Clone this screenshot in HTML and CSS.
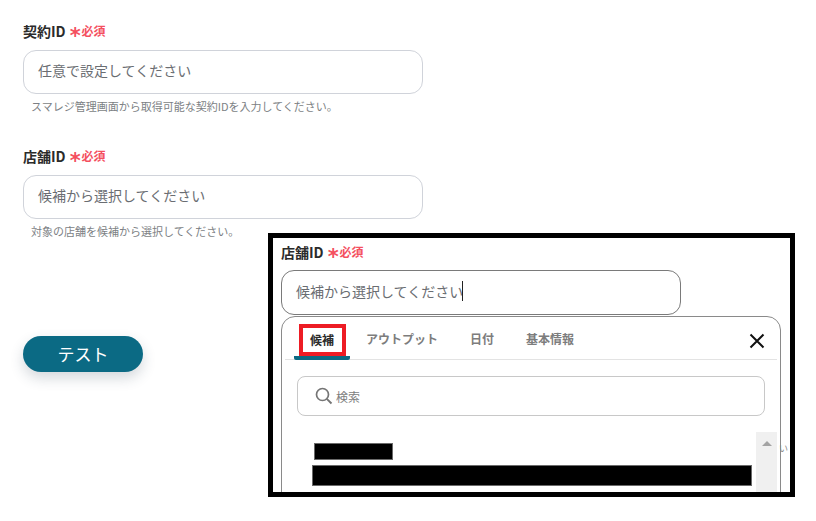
FILE: index.html
```html
<!DOCTYPE html>
<html lang="ja">
<head>
<meta charset="utf-8">
<title>店舗ID</title>
<link rel="stylesheet" href="styles.css">
</head>
<body>
<main class="form">
  <section class="field">
    <div class="label"><span>契約ID</span><span class="star">*</span><span class="req">必須</span></div>
    <div class="input">任意で設定してください</div>
    <p class="help">スマレジ管理画面から取得可能な契約IDを入力してください。</p>
  </section>
  <section class="field field-second">
    <div class="label"><span>店舗ID</span><span class="star">*</span><span class="req">必須</span></div>
    <div class="input">候補から選択してください</div>
    <p class="help">対象の店舗を候補から選択してください。</p>
  </section>
  <button class="test" type="button">テスト</button>
</main>
<aside class="inset">
  <div class="label inset-label"><span>店舗ID</span><span class="star">*</span><span class="req">必須</span></div>
  <div class="input inset-input"><span>候補から選択してください</span><i class="caret"></i></div>
  <div class="panel">
    <div class="tabs">
      <div class="tab tab-active"><span class="tab-mark">候補</span></div>
      <div class="tab">アウトプット</div>
      <div class="tab">日付</div>
      <div class="tab">基本情報</div>
      <svg class="close" width="16" height="16" viewBox="0 0 16 16" aria-label="閉じる"><path d="M1.5 1.5 14.5 14.5M14.5 1.5 1.5 14.5" stroke="#111" stroke-width="2" fill="none"/></svg>
    </div>
    <div class="search">
      <svg width="18" height="18" viewBox="0 0 18 18"><circle cx="7.5" cy="7.5" r="6" fill="none" stroke="#757575" stroke-width="1.7"/><path d="M11.8 11.8 16.5 16.5" stroke="#757575" stroke-width="1.9"/></svg>
      <span>検索</span>
    </div>
    <div class="results">
      <div class="list">
        <div class="redact redact-short"></div>
        <div class="redact redact-long"></div>
      </div>
      <div class="scrollbar"><i class="arrow"></i></div>
    </div>
  </div>
  <span class="sliver">い</span>
</aside>
</body>
</html>
```

FILE: styles.css
```css
* { box-sizing: border-box; }
html, body { margin: 0; height: 521px; overflow: hidden; background: #fff; }
body {
  position: relative;
  font-family: "Noto Sans CJK JP", "Noto Sans", sans-serif;
  color: #2b2b2b;
}
.form { padding: 22px 0 0 23px; width: 423px; }
.field-second { margin-top: 33px; }
.label {
  display: flex;
  align-items: center;
  height: 18px;
  font-size: 14px;
  font-weight: 700;
  line-height: 18px;
  color: #2b2b2b;
}
.star {
  color: #f4505f;
  font-size: 21px;
  font-weight: 700;
  margin: 9px 1px 0 4px;
  font-family: "DejaVu Sans", sans-serif;
  line-height: 18px;
}
.req { color: #f4505f; font-size: 12px; }
.input {
  display: flex;
  align-items: center;
  width: 400px;
  height: 44px;
  margin-top: 10px;
  padding: 0 0 4px 14px;
  border: 1px solid #d0d3da;
  border-radius: 13px;
  font-size: 14px;
  color: #6a6d72;
  background: #fff;
}
.help {
  margin: 4px 0 0 8px;
  font-size: 11px;
  line-height: 16px;
  color: #7c7f84;
}
.test {
  display: block;
  width: 120px;
  height: 36px;
  margin-top: 97px;
  padding: 0 0 2px;
  border: 0;
  border-radius: 18px;
  background: #0b6a84;
  color: #fff;
  font: 400 17px "Noto Sans CJK JP", sans-serif;
  box-shadow: 0 6px 14px rgba(40, 60, 80, .2);
}
.inset {
  position: absolute;
  left: 268px;
  top: 233px;
  width: 527px;
  height: 264px;
  padding: 5px 0 0 8px;
  border: 5px solid #000;
  background: #fff;
  overflow: hidden;
}
.inset-label { height: 18px; }
.inset-input {
  margin-top: 9px;
  height: 45px;
  border-color: #7a7a7a;
}
.caret { width: 1px; height: 20px; background: #222; margin-left: -1px; }
.panel {
  width: 500px;
  height: 240px;
  margin-top: 1px;
  border: 1px solid #8a8a8a;
  border-radius: 14px;
  padding: 0 3px;
  background: #fff;
}
.tabs {
  display: flex;
  align-items: flex-end;
  height: 43px;
  border-bottom: 1px solid #e3e3e3;
  position: relative;
  padding-left: 9px;
}
.tab {
  font-size: 12px;
  font-weight: 700;
  color: #7d7d7d;
  padding: 0 16px;
  height: 37px;
  line-height: 33px;
}
.tab-active {
  width: 56px;
  padding: 0;
  display: flex;
  justify-content: center;
  color: #2b2b2b;
  border-bottom: 4px solid #0b6a84;
  border-radius: 2px;
  margin-bottom: -1px;
  height: 36px;
}
.tab-mark {
  width: 47px;
  height: 32px;
  border: 4px solid #ed1c24;
  text-align: center;
  line-height: 24px;
}
.close { position: absolute; right: 12px; top: 16px; }
.search {
  display: flex;
  align-items: center;
  gap: 3px;
  width: 468px;
  height: 40px;
  margin: 16px 0 0 12px;
  padding-left: 17px;
  border: 1px solid #c8c8c8;
  border-radius: 8px;
  font-size: 12px;
  color: #7d7d7d;
}
.results {
  display: flex;
  justify-content: space-between;
  margin-top: 16px;
}
.list { padding: 11px 0 0 27px; }
.redact { background: #000; border: 1px solid #6a6a6a; }
.redact-short { width: 79px; height: 17px; margin-left: 2px; }
.redact-long { width: 440px; height: 21px; margin-top: 5px; }
.scrollbar { width: 21px; height: 70px; background: #f0f0f0; padding-top: 9px; }
.arrow {
  display: block;
  width: 0;
  margin: 0 auto;
  border: 5px solid transparent;
  border-top: 0;
  border-bottom: 5px solid #a3a3a3;
}
.sliver {
  position: absolute;
  left: 506px;
  top: 205px;
  font-size: 9px;
  line-height: 12px;
  color: #8a8a8a;
}
```
